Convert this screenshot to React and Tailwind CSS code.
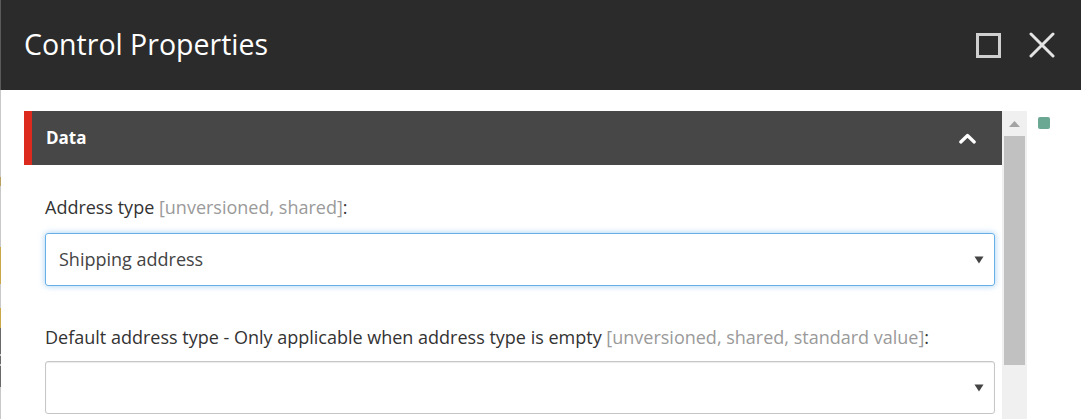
import React from "react";

const font = { fontFamily: '"Open Sans", "Noto Sans", sans-serif' };

function Caret() {
  return (
    <svg width="10" height="8" viewBox="0 0 10 8" className="shrink-0">
      <path d="M0.5 0.5 H9.5 L5 7.5 Z" fill="#444444" />
    </svg>
  );
}

export default function App() {
  return (
    <div
      className="w-[1081px] h-[419px] flex overflow-hidden bg-white"
      style={font}
    >
      {/* left edge artifact */}
      <div className="w-px h-full flex flex-col shrink-0">
        <div className="h-[90px] bg-[#5a5a5a]" />
        <div className="h-[87px] bg-[#c8c8c8]" />
        <div className="h-[9px] bg-[#b8a060]" />
        <div className="h-[61px] bg-[#c8c8c8]" />
        <div className="h-[37px] bg-[#c8a848]" />
        <div className="h-[24px] bg-[#c8c8c8]" />
        <div className="h-[20px] bg-[#c8a848]" />
        <div className="h-[26px] bg-[#6a6a6a]" />
        <div className="h-[2px] bg-[#c8c8c8]" />
        <div className="h-[8px] bg-[#6a6a6a]" />
        <div className="h-[2px] bg-[#c8c8c8]" />
        <div className="h-[21px] bg-[#6a6a6a]" />
        <div className="flex-1 bg-[#c8c8c8]" />
      </div>

      <div className="flex-1 flex flex-col">
        {/* title bar */}
        <div className="h-[90px] bg-[#2b2b2b] flex items-center pl-[23px] pr-[26px] shrink-0">
          <div className="text-[28.5px] leading-none text-white flex-1 -mt-[2px]">
            Control Properties
          </div>
          <svg width="25" height="25" viewBox="0 0 25 25" className="mr-[28px]">
            <rect x="1.5" y="1.5" width="22" height="22" fill="none" stroke="#cfcfcf" strokeWidth="3" />
          </svg>
          <svg width="26" height="26" viewBox="0 0 26 26">
            <path d="M2 2 L24 24 M24 2 L2 24" stroke="#e4e4e4" strokeWidth="3" strokeLinecap="round" />
          </svg>
        </div>

        {/* body */}
        <div className="flex-1 flex pt-[21px] pl-[23px]">
          {/* panel */}
          <div className="w-[978px] flex flex-col shrink-0">
            <div className="h-[54px] bg-[#474747] border-l-[8px] border-[#dc2a1f] flex items-center pl-[14px] pr-[26px] shrink-0">
              <div className="flex-1 text-white font-bold text-[17px] leading-none -mt-[1px]">Data</div>
              <svg width="17" height="11" viewBox="0 0 17 11">
                <path d="M1.8 9 L8.5 2.5 L15.2 9" fill="none" stroke="#ffffff" strokeWidth="3.2" strokeLinecap="round" strokeLinejoin="round" />
              </svg>
            </div>

            <div className="pl-[21px] pr-[7px] flex flex-col">
              <div className="mt-[30px] text-[18px] leading-[24px] text-[#333333] whitespace-nowrap">
                Address type <span className="text-[#9a9a9a]">[unversioned, shared]</span>:
              </div>
              <div className="mt-[14px] h-[53px] shrink-0 rounded-[3px] border-[1.5px] border-[#66afe9] shadow-[0_0_6px_rgba(102,175,233,0.6)] flex items-center pl-[13px] pr-[10px]">
                <div className="flex-1 text-[18px] text-[#444444]">Shipping address</div>
                <Caret />
              </div>

              <div className="mt-[39px] text-[18px] leading-[24px] text-[#333333] whitespace-nowrap">
                Default address type - Only applicable when address type is empty{" "}
                <span className="text-[#9a9a9a]">[unversioned, shared, standard value]</span>:
              </div>
              <div className="mt-[12px] h-[53px] shrink-0 rounded-[3px] border border-[#c6c6c6] shadow-[inset_0_1px_1px_rgba(0,0,0,0.08)] flex items-center pl-[13px] pr-[10px]">
                <div className="flex-1" />
                <Caret />
              </div>
            </div>
          </div>

          {/* scrollbar */}
          <div className="w-[25px] bg-[#f0f0f0] flex flex-col items-center shrink-0">
            <div className="h-[25px] flex items-center justify-center shrink-0">
              <svg width="11" height="6" viewBox="0 0 11 6">
                <path d="M0 6 L5.5 0 L11 6 Z" fill="#a3a3a3" />
              </svg>
            </div>
            <div className="w-[21px] h-[229px] bg-[#c1c1c1] shrink-0" />
          </div>

          {/* right area */}
          <div className="flex-1 pl-[11px] pt-[6px]">
            <div className="w-[12px] h-[12px] rounded-[2px] bg-[#6aa894]" />
          </div>
        </div>
      </div>
    </div>
  );
}
